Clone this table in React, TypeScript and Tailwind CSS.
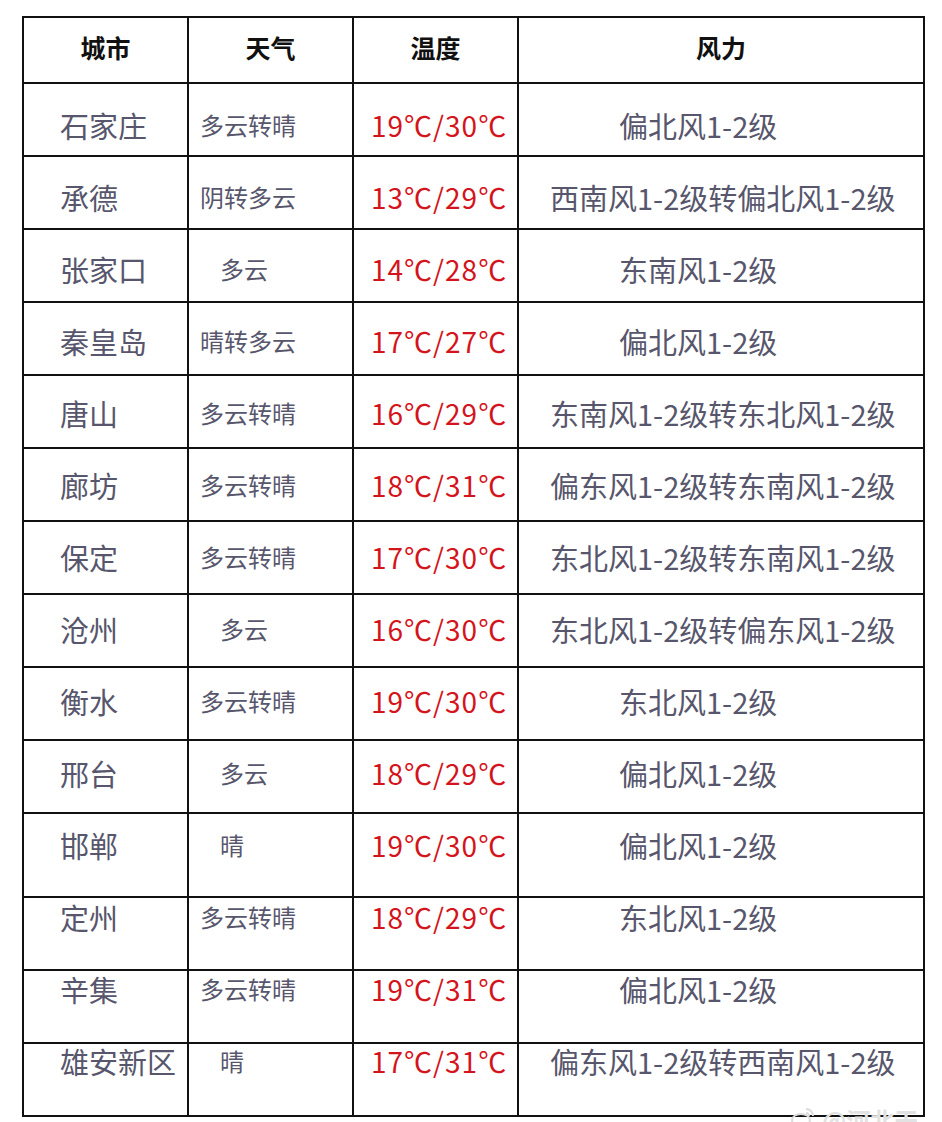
import React from "react";

type Row = {
  city: string;
  weather: string;
  wpl: string;
  temp: string;
  wind: string;
  windpl: string;
  h: string;
  pt: string;
};

const rows: Row[] = [
  { city: "石家庄", weather: "多云转晴", wpl: "pl-[11px]", temp: "19℃/30℃", wind: "偏北风1-2级", windpl: "pl-[100px]", h: "h-[73px]", pt: "pt-[25px]" },
  { city: "承德", weather: "阴转多云", wpl: "pl-[11px]", temp: "13℃/29℃", wind: "西南风1-2级转偏北风1-2级", windpl: "pl-[31px]", h: "h-[73px]", pt: "pt-[24px]" },
  { city: "张家口", weather: "多云", wpl: "pl-[31px]", temp: "14℃/28℃", wind: "东南风1-2级", windpl: "pl-[100px]", h: "h-[73px]", pt: "pt-[23px]" },
  { city: "秦皇岛", weather: "晴转多云", wpl: "pl-[11px]", temp: "17℃/27℃", wind: "偏北风1-2级", windpl: "pl-[100px]", h: "h-[73px]", pt: "pt-[22px]" },
  { city: "唐山", weather: "多云转晴", wpl: "pl-[11px]", temp: "16℃/29℃", wind: "东南风1-2级转东北风1-2级", windpl: "pl-[31px]", h: "h-[73px]", pt: "pt-[21px]" },
  { city: "廊坊", weather: "多云转晴", wpl: "pl-[11px]", temp: "18℃/31℃", wind: "偏东风1-2级转东南风1-2级", windpl: "pl-[31px]", h: "h-[73px]", pt: "pt-[20px]" },
  { city: "保定", weather: "多云转晴", wpl: "pl-[11px]", temp: "17℃/30℃", wind: "东北风1-2级转东南风1-2级", windpl: "pl-[31px]", h: "h-[73px]", pt: "pt-[19px]" },
  { city: "沧州", weather: "多云", wpl: "pl-[31px]", temp: "16℃/30℃", wind: "东北风1-2级转偏东风1-2级", windpl: "pl-[31px]", h: "h-[73px]", pt: "pt-[18px]" },
  { city: "衡水", weather: "多云转晴", wpl: "pl-[11px]", temp: "19℃/30℃", wind: "东北风1-2级", windpl: "pl-[100px]", h: "h-[73px]", pt: "pt-[17px]" },
  { city: "邢台", weather: "多云", wpl: "pl-[31px]", temp: "18℃/29℃", wind: "偏北风1-2级", windpl: "pl-[100px]", h: "h-[73px]", pt: "pt-[16px]" },
  { city: "邯郸", weather: "晴", wpl: "pl-[31px]", temp: "19℃/30℃", wind: "偏北风1-2级", windpl: "pl-[100px]", h: "h-[84px]", pt: "pt-[15px]" },
  { city: "定州", weather: "多云转晴", wpl: "pl-[11px]", temp: "18℃/29℃", wind: "东北风1-2级", windpl: "pl-[100px]", h: "h-[73px]", pt: "pt-[3px]" },
  { city: "辛集", weather: "多云转晴", wpl: "pl-[11px]", temp: "19℃/31℃", wind: "偏北风1-2级", windpl: "pl-[100px]", h: "h-[73px]", pt: "pt-[2px]" },
  { city: "雄安新区", weather: "晴", wpl: "pl-[31px]", temp: "17℃/31℃", wind: "偏东风1-2级转西南风1-2级", windpl: "pl-[31px]", h: "h-[73px]", pt: "pt-[1px]" },
];

const font = { fontFamily: '"Noto Sans CJK SC", "Noto Sans", sans-serif' };
const headFont = { fontFamily: '"Liberation Serif", "Noto Sans CJK SC", serif' };

export default function App() {
  return (
    <div className="relative w-[942px] h-[1122px] bg-white overflow-hidden pt-[16px] pl-[22px]" style={font}>
      <div className="grid grid-cols-[165px_165px_165px_406px] w-[903px] border-l-2 border-t-2 border-[#111]">
        {["城市", "天气", "温度", "风力"].map((t) => (
          <div
            key={t}
            className="h-[66px] border-r-2 border-b-2 border-[#111] flex items-center justify-center text-[25px] font-bold text-[#111] leading-[32px]"
            style={headFont}
          >
            {t}
          </div>
        ))}
        {rows.map((r) => (
          <React.Fragment key={r.city}>
            <div className={`${r.h} ${r.pt} pl-[36px] border-r-2 border-b-2 border-[#111] text-[29px] leading-[32px] text-[#57566c] whitespace-nowrap`}>
              {r.city}
            </div>
            <div className={`${r.h} ${r.pt} ${r.wpl} border-r-2 border-b-2 border-[#111] text-[24px] leading-[32px] text-[#57566c] whitespace-nowrap`}>
              {r.weather}
            </div>
            <div className={`${r.h} ${r.pt} pl-[17px] border-r-2 border-b-2 border-[#111] text-[28px] tracking-[1px] leading-[32px] text-[#d4141c] whitespace-nowrap`}>
              {r.temp}
            </div>
            <div className={`${r.h} ${r.pt} ${r.windpl} border-r-2 border-b-2 border-[#111] text-[29px] leading-[32px] text-[#57566c] whitespace-nowrap`}>
              {r.wind}
            </div>
          </React.Fragment>
        ))}
      </div>
      <div className="absolute left-[790px] top-[1106px] flex items-start gap-[6px] text-[#e2e2e2]">
        <svg width="26" height="22" viewBox="0 0 26 22" fill="none" stroke="#dcdcdc" strokeWidth="2">
          <ellipse cx="11" cy="14" rx="9" ry="6" />
          <path d="M16 3 a7 7 0 0 1 7 7" />
          <path d="M16 7 a3 3 0 0 1 3 3" />
        </svg>
        <span className="text-[24px] leading-[28px] font-bold">@河北天气</span>
      </div>
    </div>
  );
}
